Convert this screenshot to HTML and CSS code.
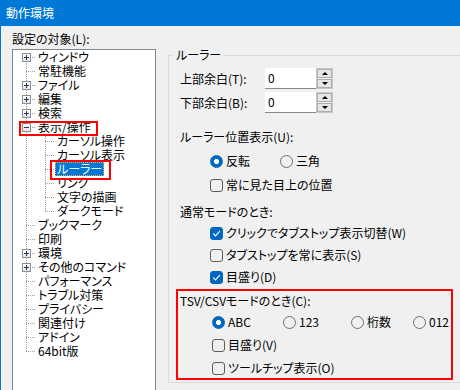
FILE: index.html
```html
<!DOCTYPE html>
<html lang="ja">
<head>
<meta charset="utf-8">
<title>動作環境</title>
<link rel="stylesheet" href="styles.css">
</head>
<body>
<div class="win">
  <div class="titlebar">動作環境</div>
  <div class="main">
    <div class="left">
      <div class="caption">設定の対象(L):</div>
      <div class="tree">
        <div class="r"><span class="c first"><span class="bx"><svg width="7" height="7" viewBox="0 0 7 7"><path d="M1 3.5h5M3.5 1v5" stroke="#1f3a66" stroke-width="1"/></svg></span></span><span class="t">ウィンドウ</span></div>
        <div class="r"><span class="c tee"></span><span class="t">常駐機能</span></div>
        <div class="r"><span class="c tee"><span class="bx"><svg width="7" height="7" viewBox="0 0 7 7"><path d="M1 3.5h5M3.5 1v5" stroke="#1f3a66" stroke-width="1"/></svg></span></span><span class="t">ファイル</span></div>
        <div class="r"><span class="c tee"><span class="bx"><svg width="7" height="7" viewBox="0 0 7 7"><path d="M1 3.5h5M3.5 1v5" stroke="#1f3a66" stroke-width="1"/></svg></span></span><span class="t">編集</span></div>
        <div class="r"><span class="c tee"><span class="bx"><svg width="7" height="7" viewBox="0 0 7 7"><path d="M1 3.5h5M3.5 1v5" stroke="#1f3a66" stroke-width="1"/></svg></span></span><span class="t">検索</span></div>
        <div class="r"><span class="c tee"><span class="bx"><svg width="7" height="7" viewBox="0 0 7 7"><path d="M1 3.5h5" stroke="#1f3a66" stroke-width="1"/></svg></span></span><span class="t">表示/操作</span></div>
        <div class="r"><span class="c pipe"></span><span class="c tee"></span><span class="t">カーソル操作</span></div>
        <div class="r"><span class="c pipe"></span><span class="c tee"></span><span class="t">カーソル表示</span></div>
        <div class="r"><span class="c pipe"></span><span class="c tee"></span><span class="t sel">ルーラー</span></div>
        <div class="r"><span class="c pipe"></span><span class="c tee"></span><span class="t">リンク</span></div>
        <div class="r"><span class="c pipe"></span><span class="c tee"></span><span class="t">文字の描画</span></div>
        <div class="r"><span class="c pipe"></span><span class="c last"></span><span class="t">ダークモード</span></div>
        <div class="r"><span class="c tee"></span><span class="t">ブックマーク</span></div>
        <div class="r"><span class="c tee"></span><span class="t">印刷</span></div>
        <div class="r"><span class="c tee"><span class="bx"><svg width="7" height="7" viewBox="0 0 7 7"><path d="M1 3.5h5M3.5 1v5" stroke="#1f3a66" stroke-width="1"/></svg></span></span><span class="t">環境</span></div>
        <div class="r"><span class="c tee"><span class="bx"><svg width="7" height="7" viewBox="0 0 7 7"><path d="M1 3.5h5M3.5 1v5" stroke="#1f3a66" stroke-width="1"/></svg></span></span><span class="t">その他のコマンド</span></div>
        <div class="r"><span class="c tee"></span><span class="t">パフォーマンス</span></div>
        <div class="r"><span class="c tee"></span><span class="t">トラブル対策</span></div>
        <div class="r"><span class="c tee"></span><span class="t">プライバシー</span></div>
        <div class="r"><span class="c tee"></span><span class="t">関連付け</span></div>
        <div class="r"><span class="c tee"></span><span class="t">アドイン</span></div>
        <div class="r"><span class="c last"></span><span class="t">64bit版</span></div>
        <div class="anno a1"></div>
        <div class="anno a2"></div>
      </div>
    </div>
    <div class="right">
      <div class="group">
        <div class="legend">ルーラー</div>
        <div class="spinrow">
          <span class="slbl">上部余白(T):</span>
          <div class="spin"><span class="field">0</span><span class="btns"><span class="sb up"></span><span class="sb dn"></span></span></div>
        </div>
        <div class="spinrow second">
          <span class="slbl">下部余白(B):</span>
          <div class="spin"><span class="field">0</span><span class="btns"><span class="sb up"></span><span class="sb dn"></span></span></div>
        </div>
        <div class="head h1">ルーラー位置表示(U):</div>
        <div class="opts o1">
          <span class="opt w70"><span class="radio on"></span>反転</span>
          <span class="opt"><span class="radio"></span>三角</span>
        </div>
        <div class="opt line l1"><span class="check"></span>常に見た目上の位置</div>
        <div class="head h2">通常モードのとき:</div>
        <div class="opt line l2"><span class="check on"><svg width="11" height="11" viewBox="0 0 11 11"><path d="M2.3 5.6l2.2 2.2 4.3-4.6" fill="none" stroke="#fff" stroke-width="1.2"/></svg></span>クリックでタブストップ表示切替(W)</div>
        <div class="opt line l3"><span class="check"></span>タブストップを常に表示(S)</div>
        <div class="opt line l3"><span class="check on"><svg width="11" height="11" viewBox="0 0 11 11"><path d="M2.3 5.6l2.2 2.2 4.3-4.6" fill="none" stroke="#fff" stroke-width="1.2"/></svg></span>目盛り(D)</div>
        <div class="tsv">
          <div class="tsvhead">TSV/CSVモードのとき(C):</div>
          <div class="opts o2">
            <span class="opt w71"><span class="radio on"></span>ABC</span>
            <span class="opt w68"><span class="radio"></span>123</span>
            <span class="opt w62"><span class="radio"></span>桁数</span>
            <span class="opt"><span class="radio"></span>012</span>
          </div>
          <div class="opt line l4"><span class="check"></span>目盛り(V)</div>
          <div class="opt line l4"><span class="check"></span>ツールチップ表示(O)</div>
        </div>
      </div>
    </div>
  </div>
</div>
</body>
</html>
```

FILE: styles.css
```css
html, body {
  margin: 0;
  padding: 0;
}
body {
  width: 460px;
  height: 390px;
  overflow: hidden;
  background: #f0f0f0;
  font-family: "Noto Sans CJK JP", "Noto Sans", sans-serif;
  font-size: 12px;
  line-height: 14px;
  color: #000;
  font-feature-settings: "palt" 1;
}
.win {
  height: 390px;
  border-left: 1px solid #0078d7;
  box-sizing: border-box;
}
.titlebar {
  height: 26px;
  background: #0078d7;
  color: #fff;
  display: flex;
  align-items: center;
  padding-left: 5px;
  font-feature-settings: normal;
}
.main {
  display: flex;
  padding-left: 11px;
}
.left {
  width: 144px;
  flex: none;
}
.caption {
  margin-top: 6px;
  height: 14px;
}
.tree {
  margin-top: 3px;
  height: 360px;
  box-sizing: border-box;
  background: #fff;
  border: 1px solid #828790;
  padding-left: 4px;
  position: relative;
}
.r {
  display: flex;
  height: 14px;
  align-items: center;
}
.c {
  width: 19px;
  height: 14px;
  flex: none;
  display: flex;
  align-items: flex-start;
  background-repeat: no-repeat;
}
.tee {
  background-image:
    repeating-linear-gradient(90deg, #a0a0a0 0 1px, transparent 1px 2px),
    repeating-linear-gradient(#a0a0a0 0 1px, transparent 1px 2px);
  background-size: 10px 1px, 1px 14px;
  background-position: 9px 7px, 9px 0;
}
.first {
  background-image:
    repeating-linear-gradient(90deg, #a0a0a0 0 1px, transparent 1px 2px),
    repeating-linear-gradient(#a0a0a0 0 1px, transparent 1px 2px);
  background-size: 10px 1px, 1px 7px;
  background-position: 9px 7px, 9px 7px;
}
.last {
  background-image:
    repeating-linear-gradient(90deg, #a0a0a0 0 1px, transparent 1px 2px),
    repeating-linear-gradient(#a0a0a0 0 1px, transparent 1px 2px);
  background-size: 10px 1px, 1px 8px;
  background-position: 9px 7px, 9px 0;
}
.pipe {
  background-image: repeating-linear-gradient(#a0a0a0 0 1px, transparent 1px 2px);
  background-size: 1px 14px;
  background-position: 9px 0;
}
.bx {
  margin: 3px 0 0 5px;
  width: 9px;
  height: 9px;
  box-sizing: border-box;
  border: 1px solid #8e8f8f;
  background: linear-gradient(#ffffff, #e4e4e4);
  display: flex;
}
.bx svg {
  display: block;
}
.t {
  padding: 0 2px;
  white-space: nowrap;
  height: 14px;
}
.sel {
  background: #0078d7;
  color: #fff;
  outline: 1px dotted #f5a94a;
  outline-offset: -1px;
}
.anno {
  position: absolute;
  box-sizing: border-box;
  border: 2px solid #f00;
}
.a1 {
  left: 6px;
  top: 71px;
  width: 79px;
  height: 15px;
}
.a2 {
  left: 37px;
  top: 110px;
  width: 61px;
  height: 20px;
}
.right {
  margin-left: 12px;
  flex: none;
}
.group {
  margin-top: 29px;
  width: 310px;
  border: 1px solid #dadada;
  padding: 0 0 2px 11px;
}
.legend {
  margin: -8px 0 0 -7px;
  padding: 0 3px;
  width: max-content;
  background: #f0f0f0;
  height: 14px;
}
.spinrow {
  display: flex;
  align-items: center;
  height: 21px;
  margin-top: 6px;
}
.spinrow.second {
  margin-top: 3px;
}
.slbl {
  width: 85px;
  flex: none;
}
.spin {
  display: flex;
  height: 21px;
}
.field {
  width: 51px;
  box-sizing: border-box;
  background: #fff;
  border-bottom: 1px solid #8a8a8a;
  padding-left: 3px;
  display: flex;
  align-items: center;
}
.btns {
  width: 17px;
  box-sizing: border-box;
  border: 1px solid #c6c6c6;
  display: flex;
  flex-direction: column;
  gap: 1px;
}
.sb {
  flex: 1;
  background: #e6e6e6;
  border: 1px solid #adadad;
  display: flex;
  align-items: center;
  justify-content: center;
}
.sb::before {
  content: "";
  width: 0;
  height: 0;
  border-left: 3px solid transparent;
  border-right: 3px solid transparent;
}
.up::before {
  border-bottom: 3px solid #000;
}
.dn::before {
  border-top: 3px solid #000;
}
.head {
  height: 14px;
}
.h1 {
  margin-top: 17px;
}
.h2 {
  margin-top: 13px;
}
.opts {
  display: flex;
  align-items: center;
  height: 14px;
  padding-left: 30px;
}
.o1 {
  margin-top: 10px;
}
.opt {
  display: flex;
  align-items: center;
  gap: 3px;
  height: 14px;
  white-space: nowrap;
  flex: none;
}
.w70 { width: 70px; }
.w71 { width: 71px; }
.w68 { width: 68px; }
.w62 { width: 62px; }
.line {
  margin-left: 30px;
}
.l1 { margin-top: 10px; }
.l2 { margin-top: 7px; }
.l3 { margin-top: 8px; }
.l4 { margin-top: 9px; margin-left: 32px; }
.radio {
  width: 13px;
  height: 13px;
  box-sizing: border-box;
  border-radius: 50%;
  border: 1px solid #6f6f6f;
  flex: none;
}
.radio.on {
  border-color: #0067c0;
  background: radial-gradient(circle, #fff 0 2.3px, #0067c0 2.9px);
}
.check {
  width: 13px;
  height: 13px;
  box-sizing: border-box;
  border-radius: 3px;
  border: 1px solid #5c5c5c;
  flex: none;
  display: flex;
  align-items: center;
  justify-content: center;
}
.check.on {
  border-color: #0067c0;
  background: #0067c0;
}
.check svg {
  display: block;
}
.tsv {
  margin: 5px 0 0 -4px;
  width: 277px;
  box-sizing: border-box;
  border: 2px solid #f00;
  padding: 3px 0 3px 2px;
}
.tsvhead {
  height: 14px;
}
.o2 {
  margin-top: 7px;
  padding-left: 32px;
}
```
